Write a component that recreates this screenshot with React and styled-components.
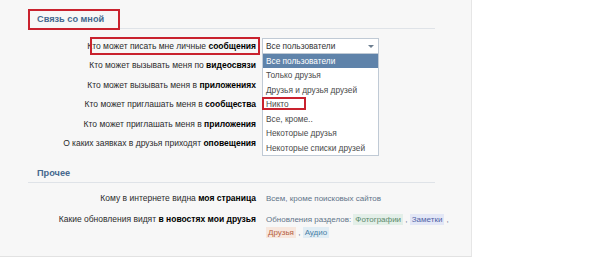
import React from 'react';
import styled, { createGlobalStyle } from 'styled-components';

const GlobalStyle = createGlobalStyle`
  html, body {
    margin: 0;
    padding: 0;
    background: #ffffff;
  }
  body {
    font-family: "Liberation Sans", Arial, sans-serif;
    font-size: 8.5px;
    color: #222;
  }
`;

const Page = styled.div`
  width: 600px;
  height: 261px;
  overflow: hidden;
  background: #fff;
`;

const Panel = styled.div`
  width: 472px;
  height: 257px;
  box-sizing: border-box;
  background: #f7f7f7;
  border-right: 1px solid #e6e6e6;
  border-bottom: 1px solid #e2e2e2;
  padding: 9px 36px 0 28px;
`;

const Section = styled.div`
  margin-bottom: ${p => p.$gap || 0}px;
`;

const Header = styled.div`
  position: relative;
  display: flex;
  align-items: flex-end;
  height: ${p => p.$h || 19}px;
  border-bottom: 1px solid #dfe3e8;
  padding-left: 9px;
  color: #45688e;
  font-weight: bold;
  font-size: 9.2px;
  line-height: 17px;
`;

const HeaderMark = styled.div`
  position: absolute;
  left: 0;
  top: 0;
  width: 92px;
  height: 21px;
  box-sizing: border-box;
  border: 2px solid #c9222e;
`;

const Rows = styled.div`
  padding-top: ${p => p.$top || 8}px;
`;

const Row = styled.div`
  display: grid;
  grid-template-columns: 228px 1fr;
  column-gap: 6px;
  min-height: ${p => p.$h || 19.4}px;
  align-items: start;
  line-height: 16px;
`;

const Label = styled.div`
  position: relative;
  text-align: right;
  color: #2b2b2b;
  white-space: nowrap;
  b {
    color: #000;
  }
`;

const LabelMark = styled.div`
  position: absolute;
  right: -4px;
  top: -1px;
  width: 170px;
  height: 18px;
  box-sizing: border-box;
  border: 2px solid #c9222e;
`;

const Value = styled.div`
  position: relative;
  padding-left: ${p => (p.$text ? 4 : 0)}px;
  padding-top: ${p => (p.$text ? 1.5 : 0)}px;
  font-size: 8px;
  line-height: ${p => (p.$text ? 13 : 17)}px;
  white-space: nowrap;
`;

const Select = styled.div`
  position: relative;
  width: 117px;
  height: 16px;
  box-sizing: border-box;
  border: 1px solid #c0cad5;
  background: #fff;
  color: #333;
  padding-left: 3px;
  line-height: 14px;
  font-size: 8.3px;
  display: flex;
  align-items: center;
  justify-content: space-between;
  padding-right: 4px;
`;

const Arrow = styled.span`
  width: 0;
  height: 0;
  border-left: 3px solid transparent;
  border-right: 3px solid transparent;
  border-top: 3px solid #6d7e90;
`;

const Options = styled.div`
  position: absolute;
  left: -1px;
  top: 15px;
  width: 117px;
  box-sizing: border-box;
  border: 1px solid #c0cad5;
  border-top: none;
  background: #fff;
  z-index: 2;
`;

const Option = styled.div`
  position: relative;
  height: ${p => (p.$active ? 14 : 14.5)}px;
  line-height: 14px;
  padding-left: 3px;
  font-size: 8.3px;
  color: ${p => (p.$active ? '#fff' : '#4a4a4a')};
  background: ${p => (p.$active ? '#5f83aa' : 'transparent')};
  white-space: nowrap;
`;

const OptionMark = styled.div`
  position: absolute;
  left: -1px;
  top: 0;
  width: 44px;
  height: 13px;
  box-sizing: border-box;
  border: 2px solid #c9222e;
`;

const Tag = styled.span`
  padding: 1px 2px;
  color: ${p => p.$fg};
  background: ${p => p.$bg};
`;

const Plain = styled.span`
  color: #5f7489;
`;

const privacyRows = [
  ['Кто может писать мне личные ', 'сообщения'],
  ['Кто может вызывать меня по ', 'видеосвязи'],
  ['Кто может вызывать меня в ', 'приложениях'],
  ['Кто может приглашать меня в ', 'сообщества'],
  ['Кто может приглашать меня в ', 'приложения'],
  ['О каких заявках в друзья приходят ', 'оповещения'],
];

const options = [
  'Все пользователи',
  'Только друзья',
  'Друзья и друзья друзей',
  'Никто',
  'Все, кроме..',
  'Некоторые друзья',
  'Некоторые списки друзей',
];

export default function App() {
  return (
    <Page>
      <GlobalStyle />
      <Panel>
        <Section $gap={9}>
          <Header>
            <HeaderMark />
            Связь со мной
          </Header>
          <Rows $top={9}>
            {privacyRows.map(([text, bold], i) => (
              <Row key={bold}>
                <Label>
                  {i === 0 && <LabelMark />}
                  {text}
                  <b>{bold}</b>
                </Label>
                <Value>
                  {i === 0 && (
                    <Select>
                      Все пользователи
                      <Arrow />
                      <Options>
                        {options.map((o, j) => (
                          <Option key={o} $active={j === 0}>
                            {o === 'Никто' && <OptionMark />}
                            {o}
                          </Option>
                        ))}
                      </Options>
                    </Select>
                  )}
                </Value>
              </Row>
            ))}
          </Rows>
        </Section>
        <Section>
          <Header $h={19}>Прочее</Header>
          <Rows $top={7}>
            <Row $h={21}>
              <Label>
                Кому в интернете видна <b>моя страница</b>
              </Label>
              <Value $text>
                <Plain>Всем, кроме поисковых сайтов</Plain>
              </Value>
            </Row>
            <Row>
              <Label>
                Какие обновления видят <b>в новостях мои друзья</b>
              </Label>
              <Value $text>
                <Plain>Обновления разделов: </Plain>
                <Tag $fg="#5b8a6c" $bg="#e3efe8">Фотографии</Tag>
                <Plain> , </Plain>
                <Tag $fg="#4f62a6" $bg="#e3e7f6">Заметки</Tag>
                <Plain> ,</Plain>
                <br />
                <Tag $fg="#b5613f" $bg="#f7e7de">Друзья</Tag>
                <Plain> , </Plain>
                <Tag $fg="#4a7fa6" $bg="#e1edf4">Аудио</Tag>
              </Value>
            </Row>
          </Rows>
        </Section>
      </Panel>
    </Page>
  );
}
